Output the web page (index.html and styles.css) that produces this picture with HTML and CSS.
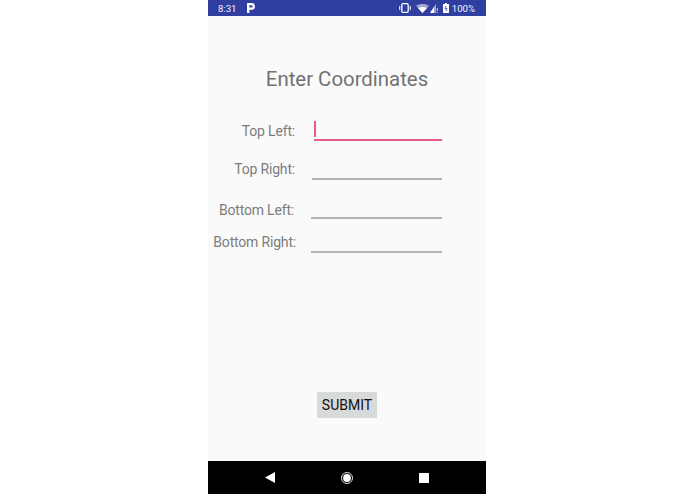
FILE: index.html
```html
<!DOCTYPE html>
<html lang="en">
<head>
    <meta charset="UTF-8">
    <meta name="viewport" content="width=device-width, initial-scale=1.0">
    <title>Enter Coordinates</title>
    <link rel="stylesheet" href="styles.css">
</head>
<body>
    <div class="phone">
        <div class="status-bar">
            <div class="status-left">
                <span class="clock">8:31</span>
                <svg class="parking" width="8" height="10" viewBox="0 0 8 10">
                    <path d="M0 0h4.500a3.300 3.300 0 0 1 0 6.800H2.400V10H0V0zM2.400 2.200v2.400h2a1.200 1.200 0 0 0 0-2.400h-2z" fill="#fff" fill-rule="evenodd"></path>
                </svg>
            </div>
            <div class="status-right">
                <svg class="icon-vibrate" width="12" height="10" viewBox="0 0 12 10">
                    <rect x="2.800" y="0.600" width="6.400" height="8.800" rx="1.500" fill="none" stroke="#fff" stroke-width="1.300"></rect>
                    <path d="M0.700 3v4M11.300 3v4" stroke="#fff" stroke-width="1"></path>
                </svg>
                <svg class="icon-wifi" width="13" height="9" viewBox="0 0 13 9">
                    <path d="M0 1.800C3.700-.6 9.300-.6 13 1.800L6.500 9z" fill="#fff" opacity="0.55"></path>
                    <path d="M2 4c2.700-1.500 6.300-1.500 9 0L6.500 9z" fill="#fff"></path>
                </svg>
                <svg class="icon-signal" width="8" height="9" viewBox="0 0 8 9">
                    <path d="M6 0v9H0z" fill="#fff" opacity="0.55"></path>
                    <path d="M4 3v6H0z" fill="#fff"></path>
                    <path d="M7.300 4v3M7.300 8v1" stroke="#fff" stroke-width="0.800"></path>
                </svg>
                <svg class="icon-battery" width="6" height="10" viewBox="0 0 6 10">
                    <path d="M2 0h2v1h2v9H0V1h2z" fill="#fff"></path>
                    <path d="M3 3 2 5.500h2L3 8" stroke="#303f9f" stroke-width="0.800" fill="none"></path>
                </svg>
                <span class="battery">100%</span>
            </div>
        </div>

        <div class="content">
            <h1>Enter Coordinates</h1>

            <div class="row row-top-left">
                <label>Top Left:</label>
                <div class="field field-focus"><span class="caret"></span></div>
            </div>
            <div class="row row-top-right">
                <label>Top Right:</label>
                <div class="field"></div>
            </div>
            <div class="row row-bottom-left">
                <label>Bottom Left:</label>
                <div class="field"></div>
            </div>
            <div class="row row-bottom-right">
                <label>Bottom Right:</label>
                <div class="field"></div>
            </div>

            <button class="submit">SUBMIT</button>
        </div>

        <div class="nav-bar">
            <svg width="10" height="11" viewBox="0 0 10 11">
                <path d="M10 0v11L0 5.500z" fill="#fff"></path>
            </svg>
            <svg width="12" height="12" viewBox="0 0 12 12">
                <circle cx="6" cy="6" r="5.500" fill="none" stroke="#ddd" stroke-width="1"></circle>
                <circle cx="6" cy="6" r="3.900" fill="#fff"></circle>
            </svg>
            <svg width="10" height="10" viewBox="0 0 10 10">
                <rect width="10" height="10" rx="0.500" fill="#fff"></rect>
            </svg>
        </div>
    </div>
</body>
</html>
```

FILE: styles.css
```css
body {
    margin: 0;
    background: #fff;
    font-family: Roboto, sans-serif;
}

.phone {
    width: 278px;
    height: 494px;
    margin-left: 208px;
    display: flex;
    flex-direction: column;
    background: #fafafa;
}

.status-bar {
    height: 16px;
    background: #303f9f;
    color: #f2f3fa;
    font-size: 9.600px;
    display: flex;
    justify-content: space-between;
    align-items: center;
    padding: 0 11px 0 10px;
}

.status-left,
.status-right {
    display: flex;
    align-items: center;
}

.status-left {
    gap: 10px;
}

.status-right {
    gap: 3px;
}

.icon-wifi {
    margin-left: 2px;
}

.icon-signal {
    margin-left: -2px;
}

.icon-battery {
    margin-left: 2px;
}

.content {
    flex: 1;
    display: flex;
    flex-direction: column;
}

h1 {
    margin: 51px 0 0;
    height: 24px;
    line-height: 24px;
    font-size: 20.400px;
    font-weight: 400;
    color: #727272;
    text-align: center;
}

.row {
    display: flex;
    align-items: flex-end;
    justify-content: flex-end;
    padding-right: 44px;
}

.row label {
    font-size: 14px;
    letter-spacing: -0.180px;
    line-height: 16px;
    color: #7d7d7d;
    white-space: nowrap;
}

.field {
    height: 19px;
    border-bottom: 2px solid #b4b4b4;
}

.row-top-left { margin-top: 29px; }
.row-top-right { margin-top: 18px; }
.row-bottom-left { margin-top: 18px; }
.row-bottom-right { margin-top: 13px; }

.row-top-left label { margin: 0 19px 2px 0; }
.row-top-right label { margin: 0 17px 3px 0; }
.row-bottom-left label { margin: 0 17px 1px 0; }
.row-bottom-right label { margin: 0 15px 3px 0; }

.row-top-left .field { width: 128px; }
.row-top-right .field { width: 130px; }
.row-bottom-left .field { width: 131px; }
.row-bottom-right .field { width: 131px; }

.field-focus {
    border-bottom-color: #e4598f;
}

.caret {
    display: block;
    width: 2px;
    height: 16px;
    margin-top: 1px;
    background: #e4598f;
}

.submit {
    align-self: center;
    margin: 139px 0 0;
    width: 60px;
    height: 26px;
    padding: 0;
    border: none;
    border-radius: 1px;
    background: #d8d9d9;
    color: #111;
    font-family: inherit;
    font-size: 14px;
}

.nav-bar {
    height: 33px;
    background: #000;
    display: flex;
    align-items: center;
    justify-content: space-between;
    padding: 0 57px;
}
```
